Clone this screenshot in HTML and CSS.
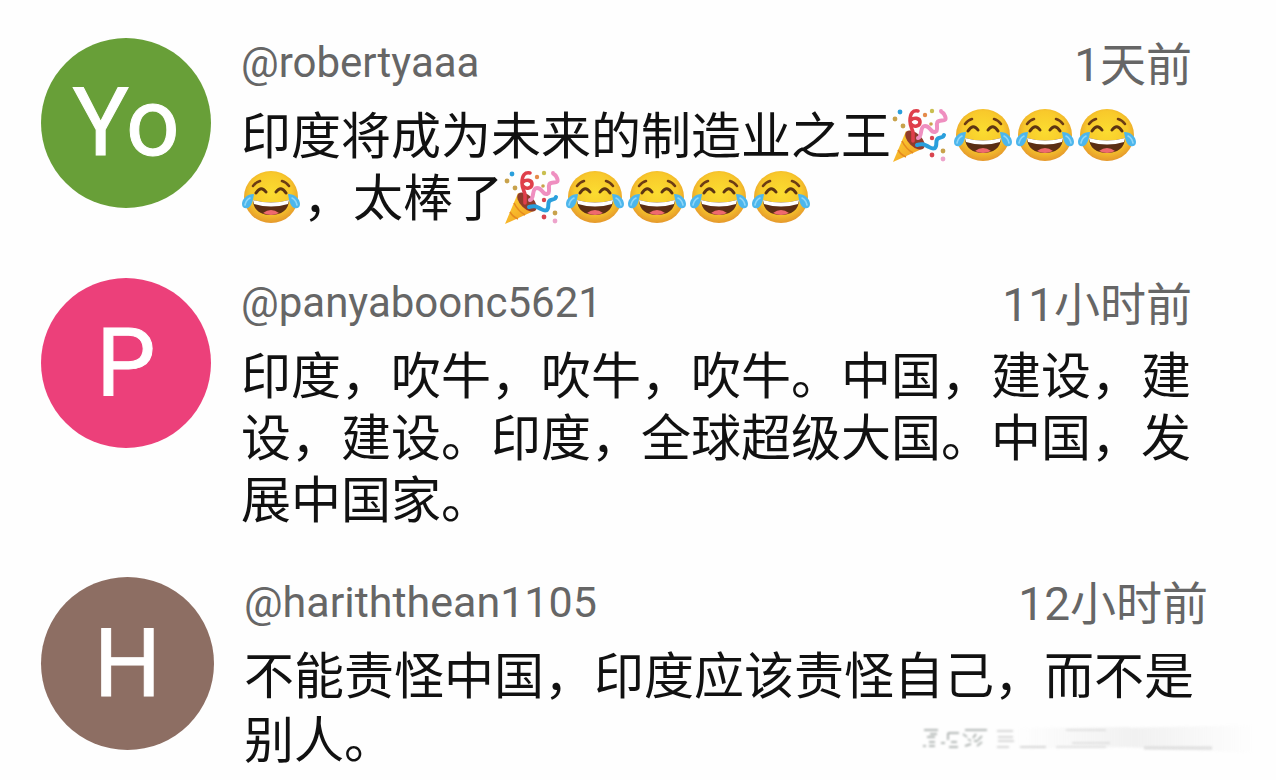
FILE: index.html
```
<!DOCTYPE html>
<html lang="zh-CN">
<head>
    <meta charset="UTF-8">
    <meta name="viewport" content="width=device-width, initial-scale=1.0">
    <title>评论</title>
    <link rel="stylesheet" href="styles.css">
</head>
<body>
    <!-- emoji shapes -->
    <svg class="sprite" aria-hidden="true">
        <defs>
            <radialGradient id="faceFill" cx="50%" cy="42%" r="58%">
                <stop offset="0" stop-color="#fbdc30"/>
                <stop offset="0.65" stop-color="#f8c92b"/>
                <stop offset="1" stop-color="#e5982c"/>
            </radialGradient>
            <linearGradient id="coneFill" x1="0" y1="0" x2="1" y2="1">
                <stop offset="0" stop-color="#fdd835"/>
                <stop offset="1" stop-color="#f0931f"/>
            </linearGradient>
        </defs>
        <symbol id="joy" viewBox="0 0 62 56">
            <ellipse cx="30" cy="28" rx="27" ry="26" fill="url(#faceFill)"/>
            <path d="M12 17q3-4 7-5M41 12q4 1 7 5" fill="none" stroke="#6d3c14" stroke-width="2.6" stroke-linecap="round"/>
            <path d="M15 24q5-8 10-1M35 23q5-7 10 1" fill="none" stroke="#5d3512" stroke-width="3" stroke-linecap="round"/>
            <path d="M12 31q18 5 36 0c0 10-8 15-18 15s-18-5-18-15z" fill="#5b2e14"/>
            <path d="M12 31q18 5 36 0l-1 4q-17 5-34 0z" fill="#fff"/>
            <path d="M22 44q8-6 16 0-8 4-16 0z" fill="#ef6a6e"/>
            <path d="M13 25c-7 0-12 5-12 10 0 4 3 5 6 4 4-2 5-8 6-14zM47 25c7 0 12 5 12 10 0 4-3 5-6 4-4-2-5-8-6-14z" fill="#4db6ec"/>
            <path d="M4 36q1-5 5-7M56 36q-1-5-5-7" fill="none" stroke="#8fd6f7" stroke-width="1.6" stroke-linecap="round"/>
        </symbol>
        <symbol id="party" viewBox="0 0 62 56">
            <path d="M2 55l13-31q9 5 18 17z" fill="url(#coneFill)"/>
            <path d="M11 34q4 8 11 12M7 43q3 5 8 7" fill="none" stroke="#e58a1e" stroke-width="1.6"/>
            <ellipse cx="24" cy="33" rx="12" ry="6.5" transform="rotate(44 24 33)" fill="#8f3b2c"/>
            <path d="M22 34v-8c0-3-3-6-3-12 0-8 3-11 8-10M20 13c3-3 9-2 9 2s-6 6-9 2" fill="none" stroke="#df3f4a" stroke-width="3.6" stroke-linecap="round"/>
            <path d="M27 31c5-1 1-12 7-12s5 7 10 6-1-10 4-11 8 0 6-5-4-3-4-5" fill="none" stroke="#ef8fc0" stroke-width="4" stroke-linecap="round"/>
            <path d="M26 38c6-2 8 0 12 2s6 2 7-1-1-7 3-8 4-1 5-3" fill="none" stroke="#2a9fdc" stroke-width="4" stroke-linecap="round"/>
            <g fill="#c8a24b">
                <circle cx="4" cy="12" r="2.4"/>
                <circle cx="12" cy="19" r="2.4"/>
                <circle cx="40" cy="17" r="1.8"/>
                <circle cx="52" cy="44" r="2.4"/>
            </g>
            <circle cx="9" cy="5" r="2.4" fill="#2a9fdc"/>
            <circle cx="34" cy="8" r="2.2" fill="#e58a4a"/>
            <circle cx="41" cy="4" r="2.2" fill="#c9bf4f"/>
            <circle cx="41" cy="31" r="2.2" fill="#d8444f"/>
            <circle cx="41" cy="48" r="2.4" fill="#d8444f"/>
            <circle cx="52" cy="52" r="2.4" fill="#eda3cb"/>
        </symbol>
    </svg>

    <main class="comments">
        <article class="comment">
            <div class="avatar avatar-green">Yo</div>
            <div class="content">
                <header class="meta">
                    <span class="author">@robertyaaa</span>
                    <time class="time">1天前</time>
                </header>
                <p class="text">印度将成为未来的制造业之王<svg class="emoji"><use href="#party"/></svg><svg class="emoji"><use href="#joy"/></svg><svg class="emoji"><use href="#joy"/></svg><svg class="emoji"><use href="#joy"/></svg><svg class="emoji"><use href="#joy"/></svg>，太棒了<svg class="emoji"><use href="#party"/></svg><svg class="emoji"><use href="#joy"/></svg><svg class="emoji"><use href="#joy"/></svg><svg class="emoji"><use href="#joy"/></svg><svg class="emoji"><use href="#joy"/></svg></p>
            </div>
        </article>

        <article class="comment">
            <div class="avatar avatar-pink">P</div>
            <div class="content">
                <header class="meta">
                    <span class="author">@panyaboonc5621</span>
                    <time class="time">11小时前</time>
                </header>
                <p class="text">印度，吹牛，吹牛，吹牛。中国，建设，建设，建设。印度，全球超级大国。中国，发展中国家。</p>
            </div>
        </article>

        <article class="comment comment-wide">
            <div class="avatar avatar-brown">H</div>
            <div class="content">
                <header class="meta">
                    <span class="author">@hariththean1105</span>
                    <time class="time">12小时前</time>
                </header>
                <p class="text">不能责怪中国，印度应该责怪自己，而不是别人。</p>
            </div>
        </article>
    </main>

    <!-- faded stamp in the corner -->
    <svg class="stamp" viewBox="0 0 336 34" aria-hidden="true">
        <defs>
            <linearGradient id="smear" x1="0" y1="0" x2="1" y2="0">
                <stop offset="0" stop-color="#d4d4d4" stop-opacity="0"/>
                <stop offset="0.5" stop-color="#d4d4d4" stop-opacity="0.3"/>
                <stop offset="1" stop-color="#d4d4d4" stop-opacity="0"/>
            </linearGradient>
        </defs>
        <path d="M2 6h14M8 10h7M5 13h8M7 18h6M1 22h3M7 22h6M26 9h11M26 9v7M19 19h4M29 18h6M27 23h9M41 10l4 3M46 15l3 2M43 22l6-2M54 10l-3 4M60 12l-4 4M52 17h4M55 22l5-4M43 6h22" fill="none" stroke="#707a76" stroke-width="1.5" opacity="0.7"/>
        <path d="M75 7h16M76 13h15M76 17h16M75 23h12M98 23h26" stroke="#a8a8a8" stroke-width="1.5" opacity="0.6"/>
        <path d="M144 6h40M150 19h38M134 23h50" stroke="#cccccc" stroke-width="2" opacity="0.5"/>
        <path d="M94 4l114-1v20l-114 2zM200 4l132-3v28l-132-6z" fill="url(#smear)"/>
        <path d="M222 24h68" stroke="#cccccc" stroke-width="3" opacity="0.6"/>
    </svg>
</body>
</html>
```

FILE: styles.css
```
* {
    box-sizing: border-box;
}

body {
    position: relative;
    margin: 0;
    min-height: 100vh;
    background-color: #fefefe;
    color: #111;
    font-family: Roboto, "Noto Sans CJK SC", sans-serif;
    overflow-x: hidden;
}

.sprite {
    position: absolute;
    width: 0;
    height: 0;
}

.comments {
    padding: 38px 84px 0 41px;
}

.comment {
    display: flex;
    align-items: flex-start;
    gap: 30px;
    margin-bottom: 53px;
}

.comment:last-child {
    margin-bottom: 0;
}

.avatar {
    display: flex;
    align-items: center;
    justify-content: center;
    flex: none;
    width: 170px;
    height: 170px;
    border-radius: 50%;
    color: #fff;
    font-size: 94px;
    line-height: 1;
    -webkit-text-stroke: 1px #fff;
}

.avatar-green {
    background-color: #689f38;
}

.avatar-pink {
    background-color: #ec407a;
}

.avatar-brown {
    background-color: #8d6e63;
}

.content {
    flex: 1;
    min-width: 0;
}

.meta {
    display: flex;
    justify-content: space-between;
    height: 50px;
    margin-bottom: 13px;
    color: #666;
    line-height: 50px;
}

.author {
    font-size: 42px;
}

.time {
    font-size: 46px;
    line-height: 54px;
}

.text {
    margin: 0;
    font-family: "Noto Sans CJK SC", sans-serif;
    font-size: 50px;
    line-height: 62px;
}

.emoji {
    width: 62px;
    height: 56px;
    vertical-align: -9px;
}

/* last comment is set a little larger and runs further right */
.comment-wide {
    margin-top: -3px;
    margin-right: -16px;
}

.comment-wide .avatar {
    width: 173px;
    height: 173px;
}

.comment-wide .author {
    font-size: 43px;
}

.comment-wide .text {
    line-height: 64px;
}

.stamp {
    position: absolute;
    right: 18px;
    bottom: 22px;
    width: 336px;
    height: 34px;
    filter: blur(1px);
}
```
